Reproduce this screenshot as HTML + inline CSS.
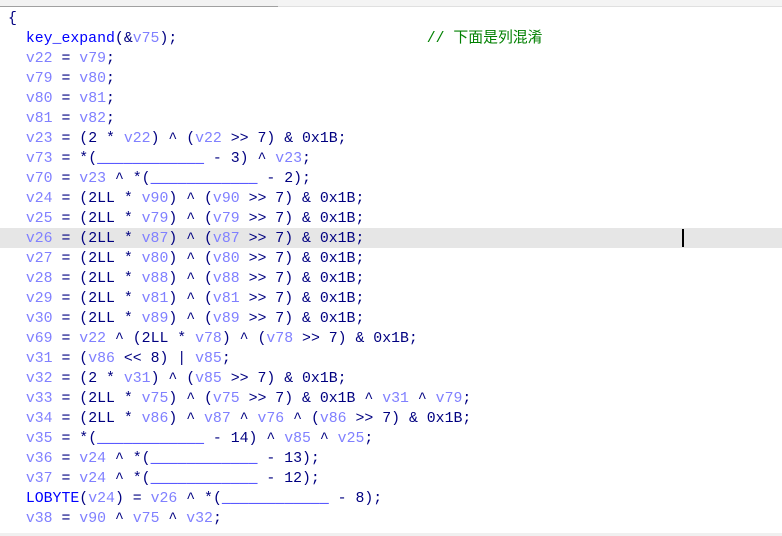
<!DOCTYPE html>
<html><head><meta charset="utf-8"><style>
html,body{margin:0;padding:0;background:#fff;width:782px;height:536px;overflow:hidden}
.top{position:absolute;left:0;top:0;width:782px;height:6px;background:#f2f2f2;border-bottom:1px solid #a0a0a0}
.top2{position:absolute;left:278px;top:0;width:504px;height:6px;background:#f4f4f4;border-bottom:1px solid #e0e0e0}
.bot{position:absolute;left:0;top:533px;width:782px;height:3px;background:#f0f0f0}
.hl{position:absolute;left:0;top:228px;width:782px;height:20px;background:#e6e6e6}
.cur{position:absolute;left:682px;top:229px;width:2px;height:18px;background:#000}
pre{position:absolute;left:8px;top:9px;margin:0;font-family:"Liberation Mono",monospace;font-size:14.85px;line-height:20px;color:#000080}
.v{color:#8080ff}.f{color:#0000ff}.u{color:#0000ff}
.c{color:#008000;font-family:"Liberation Mono","Noto Sans CJK SC",monospace}
</style></head><body>
<div class="top"></div><div class="top2"></div>
<div class="hl"></div><div class="cur"></div>
<pre>{
  <span class="f">key_expand</span>(&amp;<span class="v">v75</span>);                            <span class="c">// 下面是列混淆</span>
  <span class="v">v22</span> = <span class="v">v79</span>;
  <span class="v">v79</span> = <span class="v">v80</span>;
  <span class="v">v80</span> = <span class="v">v81</span>;
  <span class="v">v81</span> = <span class="v">v82</span>;
  <span class="v">v23</span> = (2 * <span class="v">v22</span>) ^ (<span class="v">v22</span> &gt;&gt; 7) &amp; 0x1B;
  <span class="v">v73</span> = *(<span class="u">____________</span> - 3) ^ <span class="v">v23</span>;
  <span class="v">v70</span> = <span class="v">v23</span> ^ *(<span class="u">____________</span> - 2);
  <span class="v">v24</span> = (2LL * <span class="v">v90</span>) ^ (<span class="v">v90</span> &gt;&gt; 7) &amp; 0x1B;
  <span class="v">v25</span> = (2LL * <span class="v">v79</span>) ^ (<span class="v">v79</span> &gt;&gt; 7) &amp; 0x1B;
  <span class="v">v26</span> = (2LL * <span class="v">v87</span>) ^ (<span class="v">v87</span> &gt;&gt; 7) &amp; 0x1B;
  <span class="v">v27</span> = (2LL * <span class="v">v80</span>) ^ (<span class="v">v80</span> &gt;&gt; 7) &amp; 0x1B;
  <span class="v">v28</span> = (2LL * <span class="v">v88</span>) ^ (<span class="v">v88</span> &gt;&gt; 7) &amp; 0x1B;
  <span class="v">v29</span> = (2LL * <span class="v">v81</span>) ^ (<span class="v">v81</span> &gt;&gt; 7) &amp; 0x1B;
  <span class="v">v30</span> = (2LL * <span class="v">v89</span>) ^ (<span class="v">v89</span> &gt;&gt; 7) &amp; 0x1B;
  <span class="v">v69</span> = <span class="v">v22</span> ^ (2LL * <span class="v">v78</span>) ^ (<span class="v">v78</span> &gt;&gt; 7) &amp; 0x1B;
  <span class="v">v31</span> = (<span class="v">v86</span> &lt;&lt; 8) | <span class="v">v85</span>;
  <span class="v">v32</span> = (2 * <span class="v">v31</span>) ^ (<span class="v">v85</span> &gt;&gt; 7) &amp; 0x1B;
  <span class="v">v33</span> = (2LL * <span class="v">v75</span>) ^ (<span class="v">v75</span> &gt;&gt; 7) &amp; 0x1B ^ <span class="v">v31</span> ^ <span class="v">v79</span>;
  <span class="v">v34</span> = (2LL * <span class="v">v86</span>) ^ <span class="v">v87</span> ^ <span class="v">v76</span> ^ (<span class="v">v86</span> &gt;&gt; 7) &amp; 0x1B;
  <span class="v">v35</span> = *(<span class="u">____________</span> - 14) ^ <span class="v">v85</span> ^ <span class="v">v25</span>;
  <span class="v">v36</span> = <span class="v">v24</span> ^ *(<span class="u">____________</span> - 13);
  <span class="v">v37</span> = <span class="v">v24</span> ^ *(<span class="u">____________</span> - 12);
  <span class="f">LOBYTE</span>(<span class="v">v24</span>) = <span class="v">v26</span> ^ *(<span class="u">____________</span> - 8);
  <span class="v">v38</span> = <span class="v">v90</span> ^ <span class="v">v75</span> ^ <span class="v">v32</span>;
</pre>
<div class="bot"></div>
</body></html>
